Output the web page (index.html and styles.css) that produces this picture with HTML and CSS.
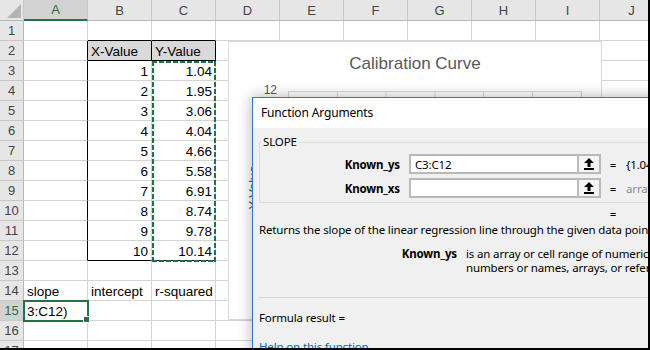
FILE: index.html
```html
<!DOCTYPE html>
<html lang="en">
<head>
    <meta charset="UTF-8">
    <title>SLOPE - Function Arguments</title>
    <link rel="stylesheet" href="styles.css">
</head>
<body>
<div class="window">
    <table class="grid">
        <colgroup>
            <col class="rh">
            <col><col><col><col><col><col><col><col><col><col class="last">
        </colgroup>
        <thead>
            <tr><th class="corner"></th><th class="sel">A</th><th>B</th><th>C</th><th>D</th><th>E</th><th>F</th><th>G</th><th>H</th><th>I</th><th>J</th></tr>
        </thead>
        <tbody>
            <tr><th>1</th><td></td><td class="bt"></td><td class="bt"></td><td></td><td></td><td></td><td></td><td></td><td></td><td></td></tr>
            <tr><th>2</th><td class="bl"></td><td class="hd">X-Value</td><td class="hd">Y-Value</td><td></td><td></td><td></td><td></td><td></td><td></td><td></td></tr>
            <tr><th>3</th><td class="bl"></td><td class="num">1</td><td class="num">1.04</td><td></td><td></td><td></td><td></td><td></td><td></td><td></td></tr>
            <tr><th>4</th><td class="bl"></td><td class="num">2</td><td class="num">1.95</td><td></td><td></td><td></td><td></td><td></td><td></td><td></td></tr>
            <tr><th>5</th><td class="bl"></td><td class="num">3</td><td class="num">3.06</td><td></td><td></td><td></td><td></td><td></td><td></td><td></td></tr>
            <tr><th>6</th><td class="bl"></td><td class="num">4</td><td class="num">4.04</td><td></td><td></td><td></td><td></td><td></td><td></td><td></td></tr>
            <tr><th>7</th><td class="bl"></td><td class="num">5</td><td class="num">4.66</td><td></td><td></td><td></td><td></td><td></td><td></td><td></td></tr>
            <tr><th>8</th><td class="bl"></td><td class="num">6</td><td class="num">5.58</td><td></td><td></td><td></td><td></td><td></td><td></td><td></td></tr>
            <tr><th>9</th><td class="bl"></td><td class="num">7</td><td class="num">6.91</td><td></td><td></td><td></td><td></td><td></td><td></td><td></td></tr>
            <tr><th>10</th><td class="bl"></td><td class="num">8</td><td class="num">8.74</td><td></td><td></td><td></td><td></td><td></td><td></td><td></td></tr>
            <tr><th>11</th><td class="bl"></td><td class="num">9</td><td class="num">9.78</td><td></td><td></td><td></td><td></td><td></td><td></td><td></td></tr>
            <tr><th>12</th><td class="bl"></td><td class="num bb">10</td><td class="num bb">10.14</td><td></td><td></td><td></td><td></td><td></td><td></td><td></td></tr>
            <tr><th>13</th><td></td><td></td><td></td><td></td><td></td><td></td><td></td><td></td><td></td><td></td></tr>
            <tr><th>14</th><td>slope</td><td>intercept</td><td>r-squared</td><td></td><td></td><td></td><td></td><td></td><td></td><td></td></tr>
            <tr><th class="sel">15</th><td class="active">3:C12)</td><td></td><td></td><td></td><td></td><td></td><td></td><td></td><td></td><td></td></tr>
            <tr><th>16</th><td></td><td></td><td></td><td></td><td></td><td></td><td></td><td></td><td></td><td></td></tr>
            <tr><th>17</th><td></td><td></td><td></td><td></td><td></td><td></td><td></td><td></td><td></td><td></td></tr>
        </tbody>
    </table>

    <!-- copy range C3:C12 -->
    <div class="ants"></div>

    <div class="chart">
        <div class="chart-title">Calibration Curve</div>
        <div class="plot-row">
            <div class="axis"><span>12</span></div>
            <div class="plot"></div>
        </div>
        <div class="axis-title">Y-Value</div>
    </div>

    <div class="dialog">
        <div class="dlg-title">Function Arguments</div>
        <div class="dlg-body">
            <fieldset class="args">
                <legend>SLOPE</legend>
                <div class="arg-row">
                    <label for="known-ys">Known_ys</label>
                    <div class="refedit">
                        <input type="text" id="known-ys" value="C3:C12">
                        <span class="ref-btn">
                            <svg width="10" height="12" viewBox="0 0 10 12"><path d="M5 0 L10 5 L6.5 5 L6.5 9 L3.5 9 L3.5 5 L0 5 Z" fill="#000"/><rect x="0" y="10" width="10" height="2" fill="#000"/></svg>
                        </span>
                    </div>
                    <span class="eq">=</span>
                    <span class="arg-val">{1.04;1.95;3.06;4.04;4.66;5.58;6.91;8.74;9.78;10.14}</span>
                </div>
                <div class="arg-row">
                    <label for="known-xs">Known_xs</label>
                    <div class="refedit">
                        <input type="text" id="known-xs" value="">
                        <span class="ref-btn">
                            <svg width="10" height="12" viewBox="0 0 10 12"><path d="M5 0 L10 5 L6.5 5 L6.5 9 L3.5 9 L3.5 5 L0 5 Z" fill="#000"/><rect x="0" y="10" width="10" height="2" fill="#000"/></svg>
                        </span>
                    </div>
                    <span class="eq">=</span>
                    <span class="arg-val hint">array</span>
                </div>
            </fieldset>
            <div class="result-eq"><span class="eq">=</span></div>
            <p class="summary">Returns the slope of the linear regression line through the given data points.</p>
            <div class="arg-help">
                <b>Known_ys</b>
                <div class="arg-desc">
                    <div>is an array or cell range of numeric dependent data points and can be</div>
                    <div>numbers or names, arrays, or references that contain numbers.</div>
                </div>
            </div>
            <div class="sep"></div>
            <div class="formula-result">Formula result =</div>
            <a class="help-link" href="#">Help on this function</a>
        </div>
    </div>
</div>
</body>
</html>
```

FILE: styles.css
```css
body {
    margin: 0;
    background: #fff;
    font-family: "Liberation Sans", Arial, sans-serif;
}
.window {
    position: relative;
    width: 650px;
    height: 350px;
    overflow: hidden;
    box-sizing: border-box;
    border-right: 2px solid #000;
    border-bottom: 2px solid #000;
}

/* sheet grid */
.grid {
    border-collapse: separate;
    border-spacing: 0;
    table-layout: fixed;
    width: 664px;
    font-size: 13.5px;
    color: #000;
}
.grid col { width: 64px; }
.grid col.rh { width: 24px; }
.grid th,
.grid td {
    box-sizing: border-box;
    padding: 0 3px;
    border-right: 1px solid #d4d4d4;
    border-bottom: 1px solid #d4d4d4;
    white-space: nowrap;
    overflow: hidden;
    line-height: 17px;
    vertical-align: bottom;
}
.grid thead tr { height: 21px; }
.grid tbody tr { height: 20px; }
.grid thead th {
    background: #e6e6e6;
    color: #444;
    font-weight: normal;
    font-size: 13px;
    vertical-align: middle;
    border-right-color: #c8c8c8;
    border-bottom-color: #b8b8b8;
}
.grid tbody th {
    background: #e6e6e6;
    color: #444;
    font-weight: normal;
    font-size: 13px;
    text-align: center;
    padding: 0;
    vertical-align: middle;
    border-right-color: #b8b8b8;
    border-bottom-color: #c8c8c8;
}
.grid thead th.sel {
    background: #d2d2d2;
    color: #217346;
    border-bottom: 2px solid #217346;
}
.grid tbody th.sel {
    background: #d2d2d2;
    color: #217346;
}
.grid th.corner {
    position: relative;
}
.grid th.corner::after {
    content: "";
    position: absolute;
    right: 2px;
    bottom: 2px;
    width: 14px;
    height: 14px;
    background: #b4b4b4;
    clip-path: polygon(100% 0, 100% 100%, 0 100%);
}
.grid td.num { text-align: right; }
.grid td.bl { border-right-color: #000; }
.grid td.bt { border-bottom-color: #000; }
.grid td.bb { border-bottom-color: #000; }
.grid td.hd {
    background: #d9d9d9;
    border-right-color: #000;
    border-bottom-color: #000;
}
.grid td.active {
    position: relative;
    outline: 2px solid #217346;
    outline-offset: -1px;
    overflow: visible;
}
.grid td.active::after {
    content: "";
    position: absolute;
    right: -3px;
    bottom: -3px;
    width: 5px;
    height: 5px;
    background: #217346;
    border: 1px solid #fff;
}

/* marching ants round the copied range */
.ants {
    position: absolute;
    left: 152px;
    top: 61px;
    width: 64px;
    height: 201px;
    background:
        repeating-linear-gradient(90deg, #217346 0 5px, transparent 5px 7px) top left / 100% 2px no-repeat,
        repeating-linear-gradient(90deg, #217346 0 5px, transparent 5px 7px) bottom left / 100% 2px no-repeat,
        repeating-linear-gradient(180deg, #217346 0 5px, transparent 5px 7px) top left / 2px 100% no-repeat,
        repeating-linear-gradient(180deg, #217346 0 5px, transparent 5px 7px) top right / 2px 100% no-repeat;
}

/* chart */
.chart {
    position: absolute;
    left: 228px;
    top: 41px;
    width: 374px;
    height: 279px;
    box-sizing: border-box;
    background: #fff;
    border: 1px solid #d9d9d9;
}
.chart-title {
    text-align: center;
    font-size: 17px;
    color: #595959;
    margin-top: 12px;
    height: 24px;
}
.plot-row {
    display: flex;
    margin-top: 13px;
}
.axis {
    width: 59px;
    box-sizing: border-box;
    padding-right: 11px;
    text-align: right;
    font-size: 12px;
    color: #595959;
}
.axis span {
    position: relative;
    top: -8px;
}
.plot {
    width: 293px;
    height: 200px;
    border-top: 1px solid #d9d9d9;
    border-right: 1px solid #d9d9d9;
    background: linear-gradient(90deg, #d9d9d9 1px, transparent 1px) 0 0 / 48.8px 100%;
}
.axis-title {
    position: absolute;
    left: 2px;
    top: 138px;
    font-size: 13px;
    color: #595959;
    transform: rotate(-90deg);
}

/* function arguments dialog */
.dialog {
    position: absolute;
    left: 252px;
    top: 97px;
    width: 470px;
    height: 290px;
    background: #f0f0f0;
    border: 1px solid #2b7bd6;
    box-shadow: 0 0 14px rgba(0, 0, 0, 0.3);
    font-family: "Noto Sans", "Open Sans", sans-serif;
    font-size: 11.5px;
    letter-spacing: -0.15px;
    color: #000;
}
.dlg-title {
    background: #fff;
    height: 30px;
    line-height: 30px;
    padding-left: 8px;
    font-size: 12px;
}
.dlg-body {
    padding: 7px 0 0 6px;
}
.args {
    margin: 0;
    padding: 5px 0 4px 0;
    border: 1px solid #dcdcdc;
    border-right: none;
}
.args legend {
    padding: 0 2px;
    margin-left: 1px;
    line-height: 14px;
}
.arg-row {
    display: flex;
    align-items: center;
    height: 20px;
    margin-bottom: 4px;
    white-space: nowrap;
}
.arg-row:last-child { margin-bottom: 0; }
.arg-row label {
    flex-shrink: 0;
    width: 140px;
    text-align: right;
    font-weight: bold;
    margin-right: 9px;
}
.refedit {
    flex-shrink: 0;
    display: flex;
    width: 192px;
    height: 20px;
    box-sizing: border-box;
    border: 2px solid #b9b9b9;
    background: #fff;
}
.refedit input {
    flex: 1;
    min-width: 0;
    border: none;
    padding: 0 4px;
    font: inherit;
    letter-spacing: inherit;
    outline: none;
    background: #fff;
}
.ref-btn {
    width: 20px;
    display: flex;
    align-items: center;
    justify-content: center;
    background: #f4f4f4;
    border-left: 2px solid #b9b9b9;
}
.eq {
    flex-shrink: 0;
    display: inline-block;
    width: 24px;
    text-align: center;
}
.arg-val { margin-left: 1px; }
.arg-val.hint { color: #8c8c8c; }
.result-eq {
    margin: 4px 0 0 342px;
    height: 14px;
    line-height: 14px;
}
.summary {
    margin: 2px 0 0;
    line-height: 14px;
    white-space: nowrap;
}
.arg-help {
    display: flex;
    margin-top: 10px;
    line-height: 14px;
    white-space: nowrap;
}
.arg-help b {
    flex-shrink: 0;
    width: 198px;
    text-align: right;
    margin-right: 9px;
}
.sep {
    margin-top: 22px;
    border-top: 1px solid #d8d8d8;
}
.formula-result {
    margin-top: 13px;
    line-height: 14px;
}
.help-link {
    display: block;
    margin-top: 15px;
    line-height: 14px;
    color: #0066cc;
    text-decoration: none;
}
```
